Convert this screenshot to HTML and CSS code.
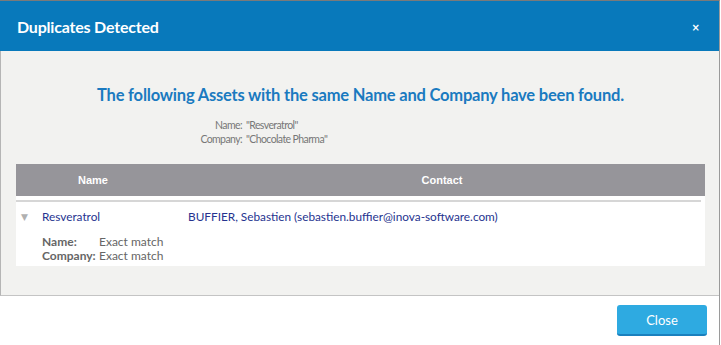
FILE: index.html
```html
<!DOCTYPE html>
<html lang="en">
<head>
    <meta charset="UTF-8">
    <title>Duplicates Detected</title>
    <link rel="stylesheet" href="styles.css">
</head>
<body>
<div class="modal">
    <div class="modal-header">
        <h3 class="modal-title">Duplicates Detected</h3>
        <span class="modal-close">&times;</span>
    </div>

    <div class="modal-body">
        <h4 class="found-msg">The following Assets with the same Name and Company have been found.</h4>

        <div class="criteria">
            <span class="crit-label">Name:</span><span>"Resveratrol"</span>
            <span class="crit-label">Company:</span><span>"Chocolate Pharma"</span>
        </div>

        <div class="dup-table">
            <div class="dup-head">
                <span></span>
                <span>Name</span>
                <span></span>
                <span>Contact</span>
            </div>
            <div class="dup-rows">
                <div class="dup-row">
                    <span class="toggle">&#9660;</span>
                    <span class="asset-name">Resveratrol</span>
                    <span></span>
                    <span class="contact">BUFFIER, Sebastien (sebastien.buffier@inova-software.com)</span>
                </div>
                <div class="match">
                    <span class="match-label">Name:</span><span>Exact match</span>
                    <span class="match-label">Company:</span><span>Exact match</span>
                </div>
            </div>
        </div>
    </div>

    <div class="modal-footer">
        <button class="btn-close">Close</button>
    </div>
</div>
</body>
</html>
```

FILE: styles.css
```css
body {
    margin: 0;
    font-family: Lato, "Open Sans", sans-serif;
    background: #ffffff;
}
.modal {
    width: 719px;
    height: 344px;
    border-top: 1px solid #7a7a7a;
    border-right: 1px solid #9a9a9a;
    display: flex;
    flex-direction: column;
}
.modal-header {
    background: #0879bb;
    height: 50px;
    display: flex;
    align-items: center;
    justify-content: space-between;
    padding: 0 19px 0 17px;
}
.modal-title {
    margin: 0;
    color: #fff;
    font-size: 16px;
    font-weight: bold;
    letter-spacing: -0.2px;
}
.modal-close {
    color: #fff;
    font-size: 10px;
    font-weight: bold;
    font-family: "DejaVu Sans", sans-serif;
    margin-top: 2px;
}
.modal-body {
    background: #f2f2f0;
    border-left: 1px solid #b5b5b5;
    border-bottom: 1px solid #c4c4c4;
    height: 244px;
    padding: 0 14px 0 15px;
}
.found-msg {
    margin: 34px 0 0;
    text-align: center;
    color: #1a7ac0;
    font-size: 16.5px;
    font-weight: bold;
    letter-spacing: -0.2px;
}
.criteria {
    display: grid;
    grid-template-columns: 226px auto;
    column-gap: 4px;
    margin-top: 13px;
    font-size: 10.5px;
    letter-spacing: -0.6px;
    line-height: 14px;
    color: #777;
}
.crit-label {
    text-align: right;
}
.dup-table {
    margin-top: 18px;
}
.dup-head,
.dup-row {
    display: grid;
    grid-template-columns: 26px 102px 44px 508px;
}
.dup-head {
    background: #96959a;
    height: 32px;
    align-items: center;
    color: #fff;
    font-family: "Liberation Sans", Arial, sans-serif;
    font-weight: bold;
    font-size: 11px;
    text-align: center;
}
.dup-rows {
    background: #fff;
    height: 66px;
    padding: 4px 4px 0;
}
.dup-rows .dup-row {
    border-top: 2px solid #d6d6d6;
    padding-top: 7px;
    margin-left: -4px;
    align-items: center;
    font-size: 11.8px;
    color: #26338f;
}
.toggle {
    color: #b0b0b0;
    font-size: 9px;
    padding-left: 5px;
    font-family: "DejaVu Sans", sans-serif;
}
.match {
    display: grid;
    grid-template-columns: 57px auto;
    margin: 11px 0 0 22px;
    font-size: 12px;
    line-height: 14px;
    color: #666;
}
.match-label {
    font-weight: bold;
}
.modal-footer {
    flex: 1;
    display: flex;
    justify-content: flex-end;
    align-items: flex-start;
    padding: 9px 12px 0 0;
}
.btn-close {
    width: 90px;
    height: 31px;
    background: #2eaae1;
    color: #fff;
    border: none;
    border-bottom: 2px solid #1a80bd;
    border-radius: 3px;
    font-family: Lato, sans-serif;
    font-size: 13px;
}
```
